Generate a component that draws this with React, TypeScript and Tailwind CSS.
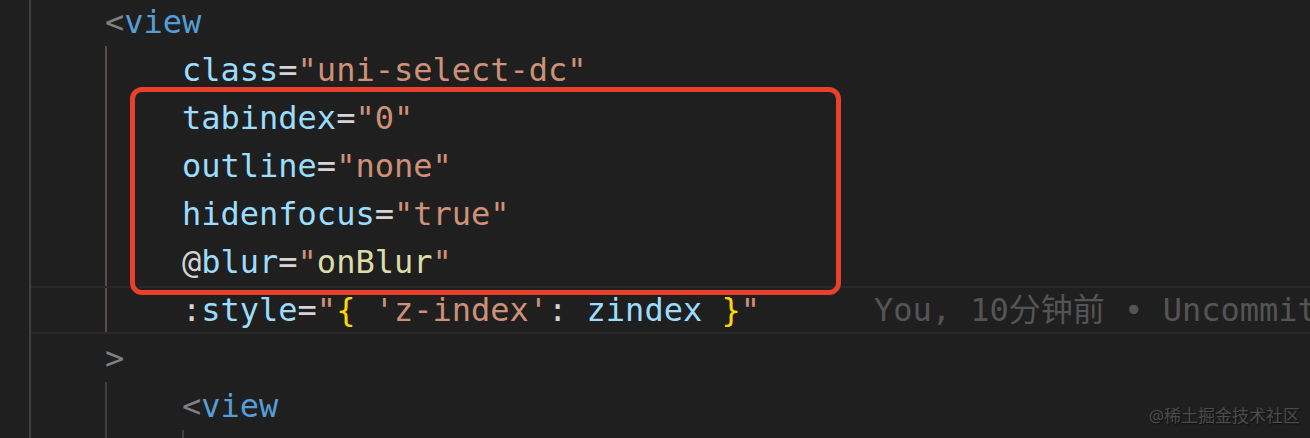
import type { ReactNode } from "react";

type Tok = [string, string];

const C = {
  punc: "text-[#808080]",
  tag: "text-[#569cd6]",
  attr: "text-[#9cdcfe]",
  eq: "text-[#d4d4d4]",
  str: "text-[#ce9178]",
  fn: "text-[#dcdcaa]",
  brace: "text-[#ffd700]",
};

const attrs: Tok[][] = [
  [["class", C.attr], ["=", C.eq], ['"uni-select-dc"', C.str]],
  [["tabindex", C.attr], ["=", C.eq], ['"0"', C.str]],
  [["outline", C.attr], ["=", C.eq], ['"none"', C.str]],
  [["hidenfocus", C.attr], ["=", C.eq], ['"true"', C.str]],
  [["@", C.eq], ["blur", C.attr], ["=", C.eq], ['"', C.str], ["onBlur", C.fn], ['"', C.str]],
];

const styleLine: Tok[] = [
  [":", C.eq],
  ["style", C.attr],
  ["=", C.eq],
  ['"', C.str],
  ["{", C.brace],
  [" ", C.eq],
  ["'z-index'", C.str],
  [": ", C.eq],
  ["zindex", C.attr],
  [" ", C.eq],
  ["}", C.brace],
  ['"', C.str],
];

function Code({ toks }: { toks: Tok[] }): ReactNode {
  return (
    <>
      {toks.map(([t, c], i) => (
        <span key={i} className={c}>
          {t}
        </span>
      ))}
    </>
  );
}

function Row({ className = "", children }: { className?: string; children: ReactNode }) {
  return <div className={`flex h-[48px] items-center whitespace-pre ${className}`}>{children}</div>;
}

export default function App() {
  return (
    <div
      className="relative h-[438px] w-[1310px] overflow-hidden bg-[#1f1f1f] pl-[29px] text-[32px] leading-none"
      style={{ fontFamily: '"DejaVu Sans Mono", "Noto Sans CJK SC", monospace' }}
    >
      <div className="-mt-[2px] h-[442px] border-l-2 border-[#404040]">
        <Row className="pl-[74px]">
          <Code toks={[["<", C.punc], ["view", C.tag]]} />
        </Row>

        {/* attributes of the active block */}
        <div className="ml-[74px] border-l-2 border-[#5e4848]">
          {attrs.map((a, i) => (
            <Row key={i} className="pl-[75px]">
              <Code toks={a} />
            </Row>
          ))}
          <Row className="-ml-[76px] h-[46px] border-y-2 border-[#282828] pl-[151px]">
            <Code toks={styleLine} />
            <span className="ml-[114px] text-[#545454]">You, 10分钟前 • Uncommitted changes</span>
          </Row>
        </div>

        <Row className="pl-[74px]">
          <Code toks={[[">", C.punc]]} />
        </Row>

        <div className="ml-[74px] border-l-2 border-[#404040]">
          <Row className="pl-[75px]">
            <Code toks={[["<", C.punc], ["view", C.tag]]} />
          </Row>
          <div className="ml-[75px] h-[20px] border-l-2 border-[#404040]" />
        </div>
      </div>

      {/* highlight box */}
      <div className="absolute left-[130px] top-[87px] h-[208px] w-[711px] rounded-[12px] border-[5px] border-[#e8402a]" />

      <div
        className="absolute right-[10px] top-[407px] text-[17px] text-[#4c4c4c] [text-shadow:1px_1px_1px_#111]"
        style={{ fontFamily: '"Noto Sans", "Noto Sans CJK SC", sans-serif' }}
      >
        @稀土掘金技术社区
      </div>
    </div>
  );
}
